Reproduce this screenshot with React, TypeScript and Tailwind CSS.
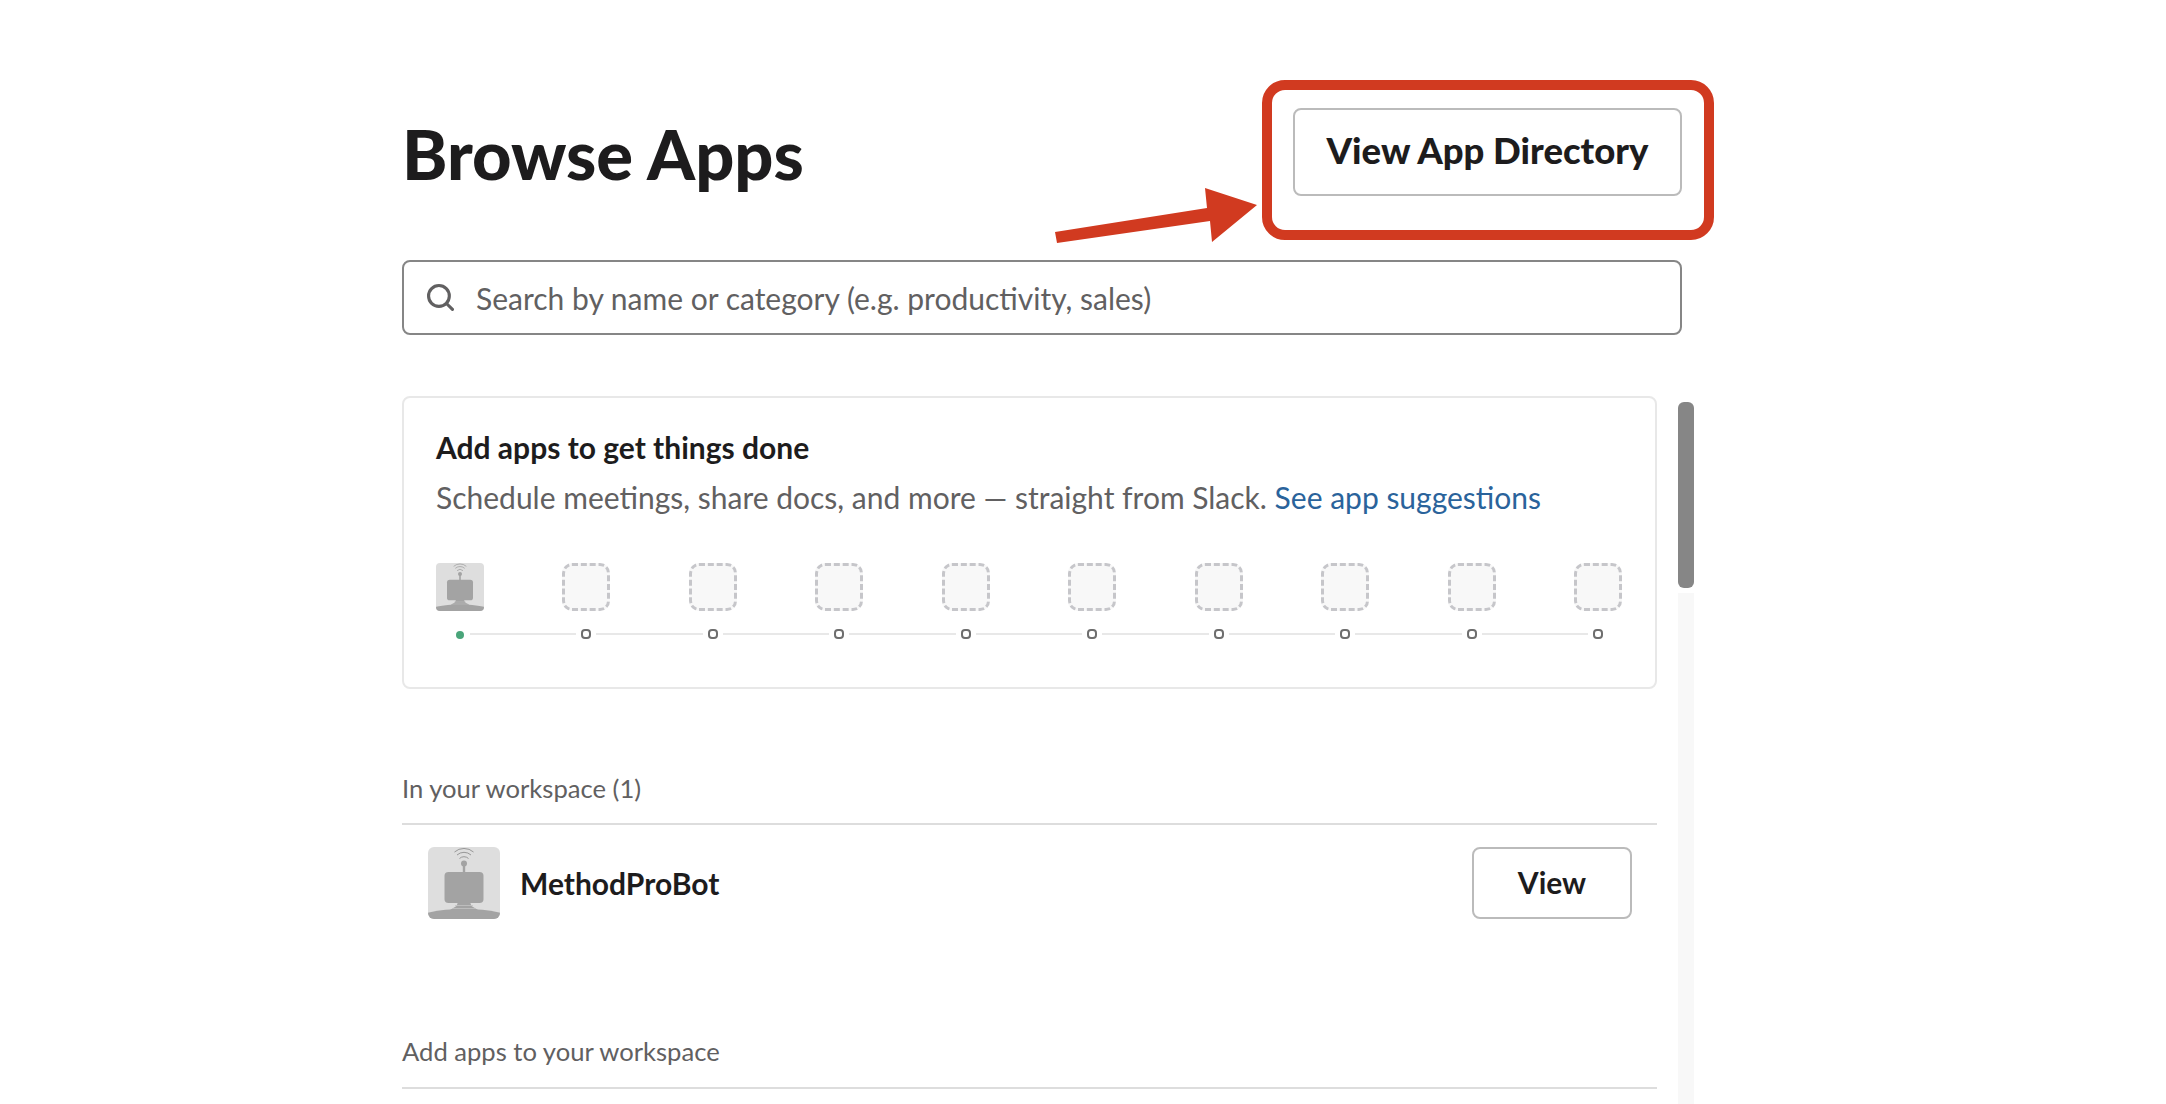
import React from "react";

function Robot({ className }: { className: string }) {
  return (
    <svg viewBox="0 0 72 72" className={className}>
      <defs>
        <clipPath id="robotClip">
          <rect width="72" height="72" rx="6" />
        </clipPath>
      </defs>
      <g clipPath="url(#robotClip)">
        <rect width="72" height="72" fill="#dedede" />
        <ellipse cx="36" cy="73" rx="48" ry="11" fill="#a3a3a3" />
        <path d="M30 55h12l1.500 4 6.500 4H22l6.500-4z" fill="#a3a3a3" />
        <path d="M27 58.500h18M24 61.500h24" stroke="#c4c4c4" strokeWidth="0.800" />
        <rect x="16.500" y="25" width="39" height="31" rx="4" fill="#a3a3a3" />
        <rect x="34.800" y="17" width="2.400" height="9" fill="#a3a3a3" />
        <circle cx="36" cy="16.500" r="3" fill="#a3a3a3" />
        <path d="M31.500 11.500a6.500 6.500 0 0 1 9 0M29 8a10.500 10.500 0 0 1 14 0M26.500 5a14.500 14.500 0 0 1 19 0" fill="none" stroke="#8f8f8f" strokeWidth="0.900" />
      </g>
    </svg>
  );
}

const slots = [0, 1, 2, 3, 4, 5, 6, 7, 8];

export default function App() {
  return (
    <div className="relative h-[1104px] w-[2166px] overflow-hidden bg-white pl-[402px] pt-[108px] font-['Lato','Liberation_Sans',sans-serif] text-[#1d1c1d]">
      <header className="flex h-[88px] w-[1280px] items-center justify-between">
        <h1 className="mt-[4px] text-[68.600px] font-black leading-none">Browse Apps</h1>
        <button className="h-[88px] w-[389px] rounded-lg border-2 border-[#bbbbbb] bg-white pb-[4px] text-[36.500px] font-black">
          View App Directory
        </button>
      </header>

      <div className="mt-[64px] flex h-[75px] w-[1280px] items-center rounded-lg border-2 border-[#868686] pl-[23px] text-[30px] text-[#616061]">
        <svg viewBox="0 0 26 26" className="h-[27px] w-[27px]" fill="none" stroke="#616061" strokeWidth="3" strokeLinecap="round">
          <circle cx="11.500" cy="11.500" r="10" />
          <path d="M19 19l5.500 5.500" />
        </svg>
        <span className="ml-[22px] pt-[1px]">Search by name or category (e.g. productivity, sales)</span>
      </div>

      <div className="mt-[61px] flex h-[708px]">
        <div className="w-[1255px]">
          <section className="h-[293px] rounded-lg border-2 border-[#e8e8e8] pl-[32px] pr-[33px] pt-[29px]">
            <h2 className="text-[30px] font-bold leading-[40px]">Add apps to get things done</h2>
            <p className="mt-[10px] text-[30px] leading-[40px] text-[#616061]">
              Schedule meetings, share docs, and more — straight from Slack.{" "}
              <span className="text-[#2a639b]">See app suggestions</span>
            </p>
            <div className="mt-[46px] flex justify-between">
              <Robot className="h-[48px] w-[48px]" />
              {slots.map((i) => (
                <div key={i} className="h-[48px] w-[48px] rounded-[10px] border-[3px] border-dashed border-[#c6c6ca] bg-[#f8f8f8]" />
              ))}
            </div>
            <div className="ml-[19px] mr-[19px] mt-[18px] flex items-center">
              <div className="flex h-[10px] w-[10px] items-center justify-center pt-[1px]">
                <div className="h-2 w-2 rounded-full bg-[#4aa57a]" />
              </div>
              {slots.map((i) => (
                <React.Fragment key={i}>
                  <div className="mx-[5px] h-[2px] flex-1 bg-[#e8e8e8]" />
                  <div className="h-[10px] w-[10px] rounded-[4px] border-2 border-[#6e6e6e]" />
                </React.Fragment>
              ))}
            </div>
          </section>

          <h3 className="mt-[82px] text-[25.600px] leading-[34px] text-[#616061]">In your workspace (1)</h3>
          <div className="mt-[18px] flex h-[264px] items-start justify-between border-t-2 border-[#dddddd] pl-[26px] pr-[25px] pt-[22px]">
            <div className="flex items-center">
              <Robot className="h-[72px] w-[72px]" />
              <span className="ml-[20px] text-[30px] font-bold">MethodProBot</span>
            </div>
            <button className="h-[72px] w-[160px] rounded-lg border-2 border-[#bbbbbb] bg-white pb-[2px] text-[30px] font-bold">
              View
            </button>
          </div>
          <h3 className="-mt-[53px] text-[25.600px] leading-[34px] text-[#616061]">Add apps to your workspace</h3>
          <div className="mt-[19px] border-t-2 border-[#dddddd]" />
        </div>

        <div className="ml-[21px] mt-[1px] flex w-4 flex-col bg-[#f8f8f8]">
          <div className="bg-white py-[5px]">
            <div className="h-[186px] rounded-md bg-[#868686]" />
          </div>
        </div>
      </div>

      <svg viewBox="0 0 670 170" className="absolute left-[1050px] top-[75px] h-[170px] w-[670px]" fill="#d13a20">
        <path d="M5 157l152-24-2-20 52 17-45 37-2-21-153 22z" />
        <rect x="217" y="10" width="442" height="150" rx="18" fill="none" stroke="#d13a20" strokeWidth="10" />
      </svg>
    </div>
  );
}
